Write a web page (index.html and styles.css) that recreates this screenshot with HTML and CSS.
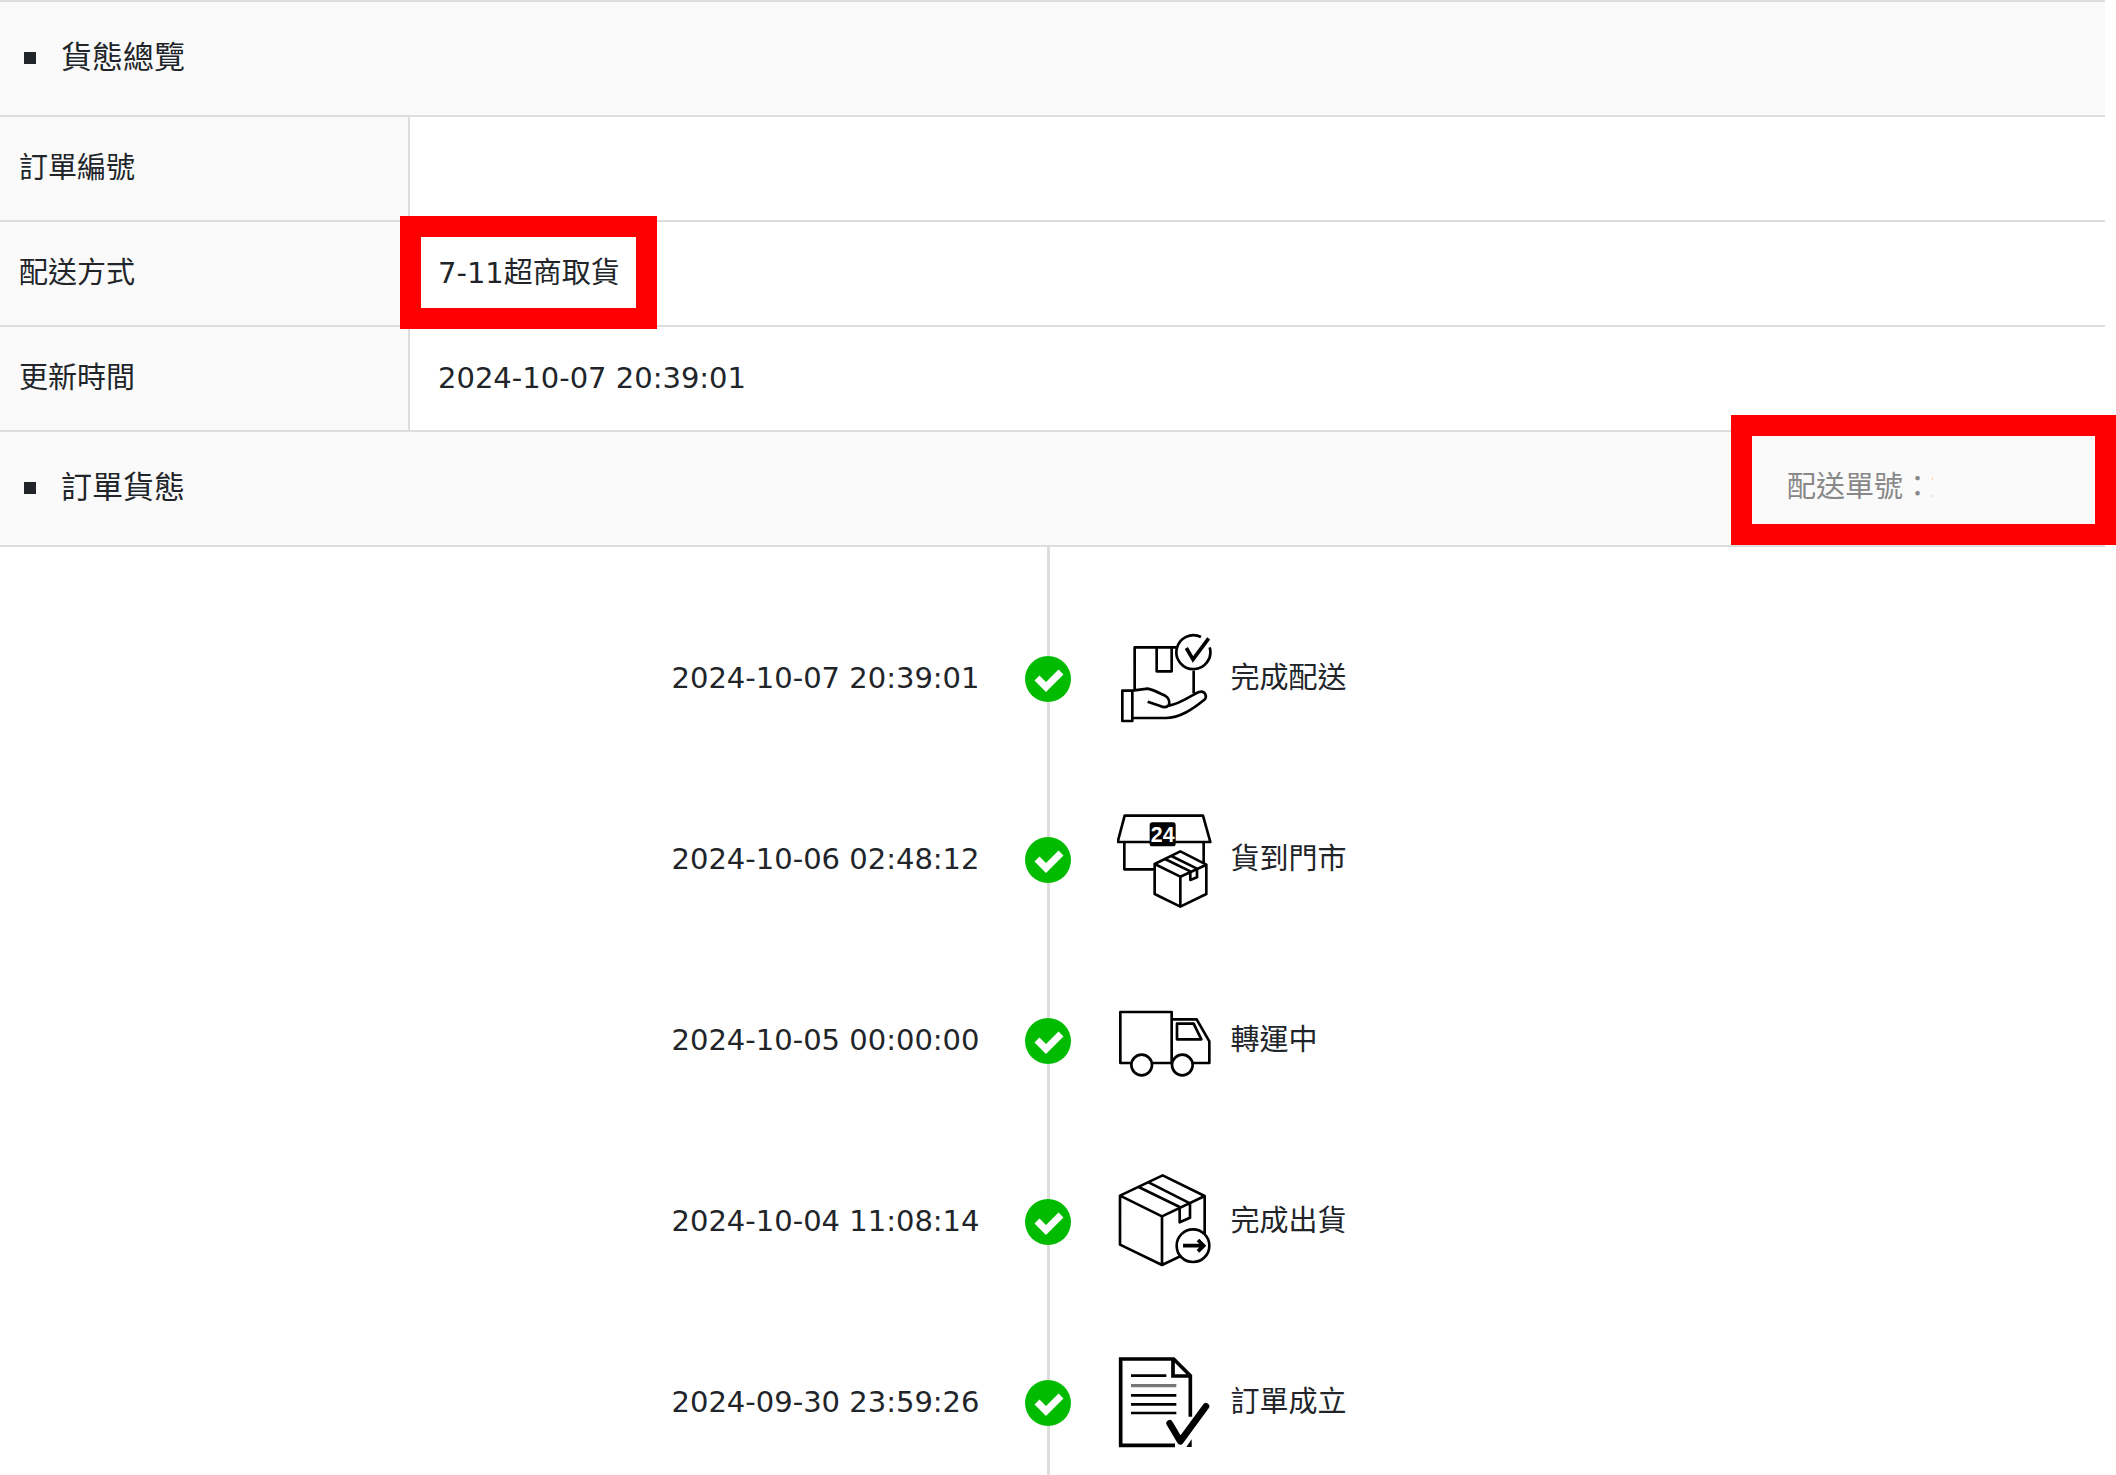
FILE: index.html
```html
<!DOCTYPE html>
<html lang="zh-Hant">
	<head>
		<meta charset="utf-8">
		<title>訂單貨態</title>
		<link rel="stylesheet" href="styles.css">
	</head>
	<body>
		<div class="page">
			<div class="bar">
				<h2 class="bar_title">貨態總覽</h2>
			</div>
			<table class="info">
				<tr><th scope="row">訂單編號</th><td></td></tr>
				<tr><th scope="row">配送方式</th><td><span class="marked">7-11超商取貨</span></td></tr>
				<tr><th scope="row">更新時間</th><td>2024-10-07 20:39:01</td></tr>
			</table>
			<div class="bar">
				<h2 class="bar_title">訂單貨態</h2>
				<div class="marked tracking">配送單號：<span class="tracking_no"></span></div>
			</div>

			<ol class="timeline">
				<li class="step">
					<time class="step_time">2024-10-07 20:39:01</time>
					<svg class="step_dot" viewBox="0 0 46 46"><circle cx="23" cy="23" r="23"/><path d="M12 22l9 9 15-15"/></svg>
					<div class="step_state">
						<!-- hand holding a parcel -->
						<svg class="icon" viewBox="354 63 288 288">
							<path d="M407 238V112H536M473 112V184H518V112M584 182V250"/>
							<path d="M606 81A51 51 0 1 0 632 112"/>
							<path class="thick" d="M562 114L582 148L629 85"/>
							<path d="M370 242H400V333H370zM400 242L446 236C466 240 482 250 500 258Q514 268 510 284Q502 296 484 288L446 275M510 287C546 280 572 258 600 246C618 240 626 260 616 269C580 298 542 324 500 324H400"/>
						</svg>
						<span class="step_name">完成配送</span>
					</div>
				</li>
				<li class="step">
					<time class="step_time">2024-10-06 02:48:12</time>
					<svg class="step_dot" viewBox="0 0 46 46"><circle cx="23" cy="23" r="23"/><path d="M12 22l9 9 15-15"/></svg>
					<div class="step_state">
						<!-- store front with a parcel -->
						<svg class="icon" viewBox="354 66 288 288">
							<path d="M377 77H612L634 156H356zM376 156V238H466M614 156V222"/>
							<rect class="solid" x="452" y="97" width="78" height="72" rx="8"/>
							<text class="sign" x="491" y="157">24</text>
							<path class="blank" d="M467 222L544 184L622 224V312L544 350L467 312z"/>
							<path d="M467 222L544 260L622 224M544 260V350M498 207L574 244V270L594 262V236L517 198"/>
						</svg>
						<span class="step_name">貨到門市</span>
					</div>
				</li>
				<li class="step">
					<time class="step_time">2024-10-05 00:00:00</time>
					<svg class="step_dot" viewBox="0 0 46 46"><circle cx="23" cy="23" r="23"/><path d="M12 22l9 9 15-15"/></svg>
					<div class="step_state">
						<!-- truck -->
						<svg class="icon" viewBox="354 39 288 288">
							<path d="M364 96H518V249H364zM518 118H593L631 184V249H518M534 131H584L607 178H534z"/>
							<circle class="blank" cx="428" cy="255" r="31"/>
							<circle class="blank" cx="550" cy="255" r="31"/>
						</svg>
						<span class="step_name">轉運中</span>
					</div>
				</li>
				<li class="step">
					<time class="step_time">2024-10-04 11:08:14</time>
					<svg class="step_dot" viewBox="0 0 46 46"><circle cx="23" cy="23" r="23"/><path d="M12 22l9 9 15-15"/></svg>
					<div class="step_state">
						<!-- parcel going out -->
						<svg class="icon" viewBox="354 72 288 288">
							<path d="M363 137L491 76L617 138V284L489 345L363 284zM363 137L489 199L617 138M489 199V345M419 111L542 171V217L573 203V160L449 97"/>
							<circle class="blank" cx="582" cy="287" r="49"/>
							<path class="thick" d="M552 287H614M597 270L614 287L597 304"/>
						</svg>
						<span class="step_name">完成出貨</span>
					</div>
				</li>
				<li class="step">
					<time class="step_time">2024-09-30 23:59:26</time>
					<svg class="step_dot" viewBox="0 0 46 46"><circle cx="23" cy="23" r="23"/><path d="M12 22l9 9 15-15"/></svg>
					<div class="step_state">
						<!-- order sheet with a tick -->
						<svg class="icon" viewBox="354 57 288 288">
							<path class="thick" d="M574 242V119L524 69H365V328H528M522 69V120H574"/>
							<path class="solid" d="M578 310V333H562z"/>
							<path d="M396 119H502M396 178H532M396 205H532M396 231H532"/>
							<path class="grey" d="M396 149H532"/>
							<path class="tick" d="M512 262L544 316L621 211"/>
						</svg>
						<span class="step_name">訂單成立</span>
					</div>
				</li>
			</ol>
		</div>
	</body>
</html>
```
FILE: styles.css
```css
body {
	margin:0;
	background:#fff;
	color:#212529;
	font-family:"DejaVu Sans", "Noto Sans CJK TC", sans-serif;
	font-size:29px;
	line-height:43px;
}
.page {
	display:flex;
	flex-direction:column;
	box-sizing:border-box;
	min-height:100vh;
	margin-right:11px;
	border-top:solid 2px #ddd;
}

/* section bars */
.bar {
	display:flex;
	justify-content:space-between;
	padding:34px 0 36px 24px;
	background:#fafafa;
	border-bottom:solid 2px #ddd;
}
.bar_title {
	display:flex;
	align-items:center;
	gap:25px;
	margin:0;
	font-size:31px;
	font-weight:normal;
}
.bar_title::before {
	content:"";
	width:12px;
	height:12px;
	background:#212529;
}

/* overview table */
.info {
	width:100%;
	border-collapse:separate;
	border-spacing:0;
}
.info th, .info td {
	height:43px;
	padding:30px 28px;
	border-bottom:solid 2px #ddd;
	font-weight:normal;
	text-align:left;
}
.info th {
	box-sizing:content-box;
	width:361px;
	padding-left:19px;
	background:#fafafa;
	border-right:solid 2px #ddd;
}

/* red frames around the important fields */
.marked {
	display:inline-block;
	position:relative;
}
.marked::after {
	content:"";
	position:absolute;
	top:-36px;
	right:-37px;
	bottom:-34px;
	left:-38px;
	border:solid 21px #f00;
}
.tracking {
	width:318px;
	color:#888;
}
.tracking::after {
	top:-51px;
	right:-11px;
	bottom:-36px;
	left:-56px;
}
.tracking_no {
	display:inline-block;
	width:1px;
	height:15px;
	border-top:solid 2px #fc9;
	border-bottom:solid 2px #fc9;
}

/* timeline */
.timeline {
	flex:1;
	display:flex;
	flex-direction:column;
	gap:85px;
	margin:0;
	padding:84px 10px 26px 0;
	list-style:none;
	background:linear-gradient(#ddd, #ddd) calc(50% - 4px) 0 / 3px 100% no-repeat;
}
.step {
	display:grid;
	grid-template-columns:minmax(0, 1fr) 46px minmax(0, 1fr);
	align-items:center;
}
.step_time {
	padding-right:45px;
	padding-bottom:2px;
	text-align:right;
}
.step_dot {
	display:block;
	width:46px;
	height:46px;
	fill:#0b0;
}
.step_dot path {
	fill:none;
	stroke:#fff;
	stroke-width:7;
}
.step_state {
	display:flex;
	align-items:center;
	gap:18px;
	padding-left:46px;
}
.step_name {
	padding-bottom:2px;
}

/* line icons */
.icon {
	width:96px;
	height:96px;
	fill:none;
	stroke:#000;
	stroke-width:8;
	stroke-linejoin:round;
}
.icon .thick {
	stroke-width:11;
	stroke-linejoin:miter;
}
.icon .blank {
	fill:#fff;
}
.icon .solid {
	fill:#000;
	stroke:none;
}
.icon .grey {
	stroke:#777;
	stroke-width:10;
}
.icon .tick {
	stroke-width:20;
	stroke-linecap:round;
}
.icon .sign {
	fill:#fff;
	stroke:none;
	font-family:"Liberation Sans", sans-serif;
	font-size:64px;
	font-weight:bold;
	text-anchor:middle;
}
```
